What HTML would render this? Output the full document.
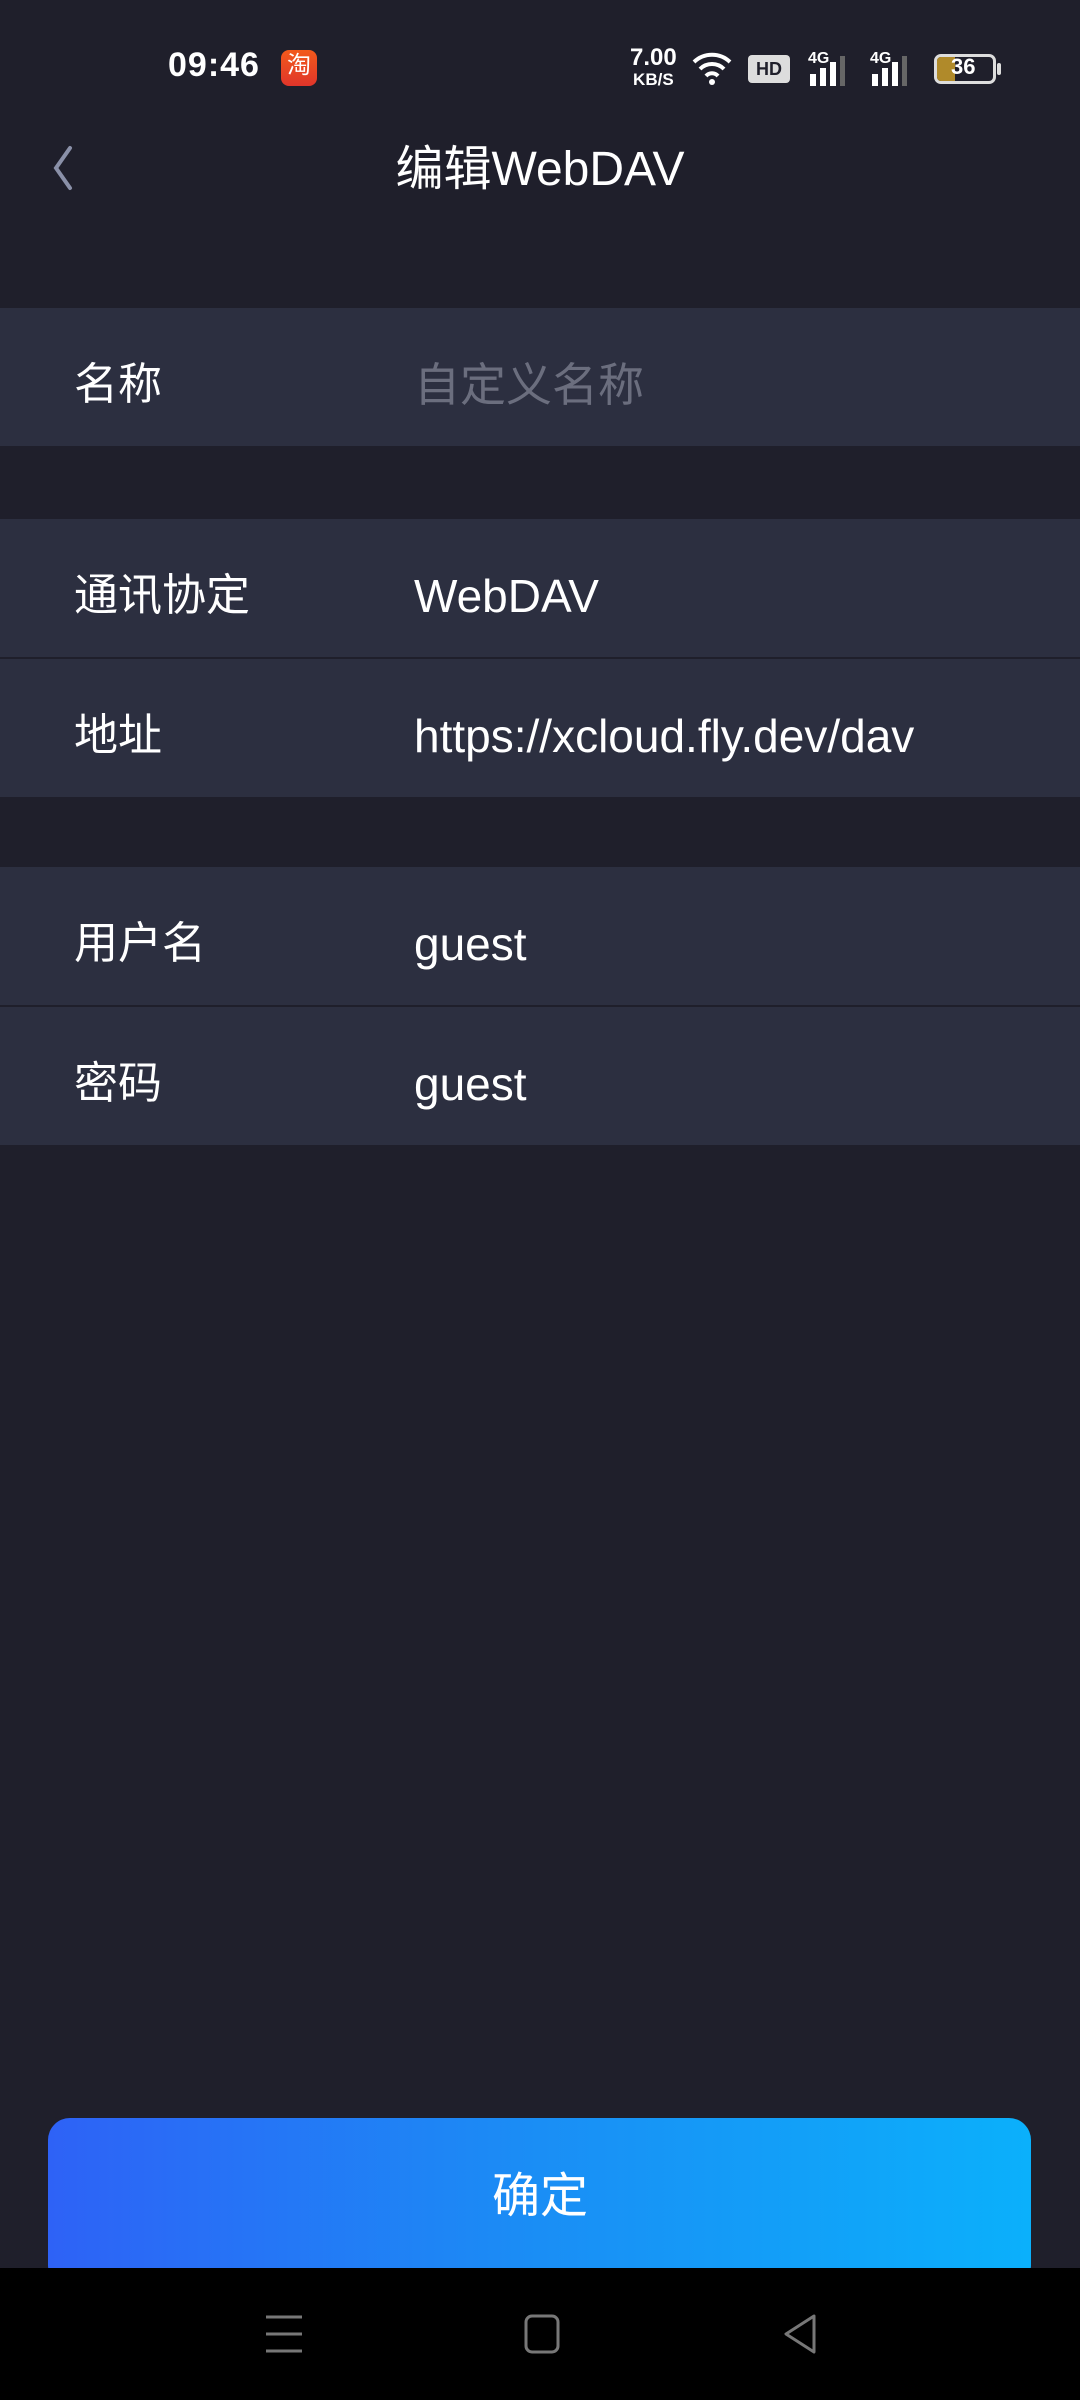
<!DOCTYPE html>
<html><head><meta charset="utf-8"><style>
*{margin:0;padding:0;box-sizing:border-box}
body{width:1080px;height:2400px;background:#1f1f2b;position:relative;overflow:hidden;font-family:"Liberation Sans","Noto Sans CJK SC",sans-serif;color:#fff}
.abs{position:absolute}
.row{position:absolute;left:0;width:1080px;height:138px;background:#2c2f40}
.row .l{position:absolute;left:74px;top:8px;line-height:138px;font-size:44px}
.row .v{position:absolute;left:414px;top:8px;line-height:138px;font-size:46px}
</style></head><body>
<div class="abs" style="left:168px;top:46px;font-size:34px;font-weight:bold;letter-spacing:1px">09:46</div>
<div class="abs" style="left:281px;top:50px;width:36px;height:36px;border-radius:8px;background:linear-gradient(#f25a1c,#e0352a);color:#fff;font-size:24px;line-height:32px;text-align:center">淘</div>
<div class="abs" style="left:630px;top:48px;font-size:24px;font-weight:bold;line-height:20px;text-align:center">7.00<br><span style="font-size:17px">KB/S</span></div>
<svg class="abs" style="left:690px;top:50px" width="44" height="36" viewBox="0 0 44 36"><path d="M4 12a26 26 0 0 1 36 0M10 19a17 17 0 0 1 24 0M16 26a8 8 0 0 1 12 0" stroke="#fff" stroke-width="4" fill="none"/><circle cx="22" cy="32" r="3" fill="#fff"/></svg>
<div class="abs" style="left:748px;top:55px;width:42px;height:28px;border-radius:4px;background:#ddd;color:#1f1f2b;font-size:18px;font-weight:bold;line-height:28px;text-align:center">HD</div>
<div class="abs" style="left:808px;top:50px;font-size:16px;font-weight:bold">4G</div>
<svg class="abs" style="left:810px;top:56px" width="40" height="30"><rect x="0" y="18" width="6" height="12" fill="#fff"/><rect x="10" y="12" width="6" height="18" fill="#fff"/><rect x="20" y="6" width="6" height="24" fill="#fff"/><rect x="30" y="0" width="5" height="30" fill="#666"/></svg>
<div class="abs" style="left:870px;top:50px;font-size:16px;font-weight:bold">4G</div>
<svg class="abs" style="left:872px;top:56px" width="40" height="30"><rect x="0" y="18" width="6" height="12" fill="#fff"/><rect x="10" y="12" width="6" height="18" fill="#fff"/><rect x="20" y="6" width="6" height="24" fill="#fff"/><rect x="30" y="0" width="5" height="30" fill="#666"/></svg>
<div class="abs" style="left:934px;top:54px;width:62px;height:30px;border:3px solid #ddd;border-radius:7px;overflow:hidden"><div style="width:18px;height:100%;background:#b08a2a"></div><div class="abs" style="left:14px;top:-3px;font-size:22px;font-weight:bold">36</div></div>
<div class="abs" style="left:997px;top:63px;width:4px;height:12px;background:#ddd;border-radius:2px"></div>
<svg class="abs" style="left:44px;top:142px" width="36" height="52"><path d="M26 6L12 26L26 46" stroke="#8a90a8" stroke-width="4" fill="none" stroke-linecap="round"/></svg>
<div class="abs" style="left:0;width:1080px;top:138px;text-align:center;font-size:48px;line-height:64px">编辑WebDAV</div>
<div class="row" style="top:308px"><div class="l">名称</div><div class="v" style="color:#6b6e7e">自定义名称</div></div>
<div class="row" style="top:519px"><div class="l">通讯协定</div><div class="v">WebDAV</div></div>
<div class="row" style="top:659px"><div class="l">地址</div><div class="v">https://xcloud.fly.dev/dav</div></div>
<div class="row" style="top:867px"><div class="l">用户名</div><div class="v">guest</div></div>
<div class="row" style="top:1007px"><div class="l">密码</div><div class="v">guest</div></div>
<div class="abs" style="left:48px;top:2118px;width:983px;height:170px;border-radius:22px;background:linear-gradient(90deg,#2e62f6,#1a8ef5 50%,#0bb0fb);"></div>
<div class="abs" style="left:0;width:1080px;top:2162px;text-align:center;font-size:48px;line-height:70px">确定</div>
<div class="abs" style="left:0;top:2268px;width:1080px;height:132px;background:#000"></div>
<svg class="abs" style="left:262px;top:2312px" width="46" height="44"><path d="M4 5h36M4 22h36M4 39h36" stroke="#777" stroke-width="3"/></svg>
<svg class="abs" style="left:522px;top:2312px" width="40" height="44"><rect x="4" y="4" width="32" height="36" rx="6" stroke="#777" stroke-width="3" fill="none"/></svg>
<svg class="abs" style="left:780px;top:2312px" width="40" height="44"><path d="M34 4L6 22L34 40Z" stroke="#777" stroke-width="3" fill="none" stroke-linejoin="round"/></svg>
</body></html>
